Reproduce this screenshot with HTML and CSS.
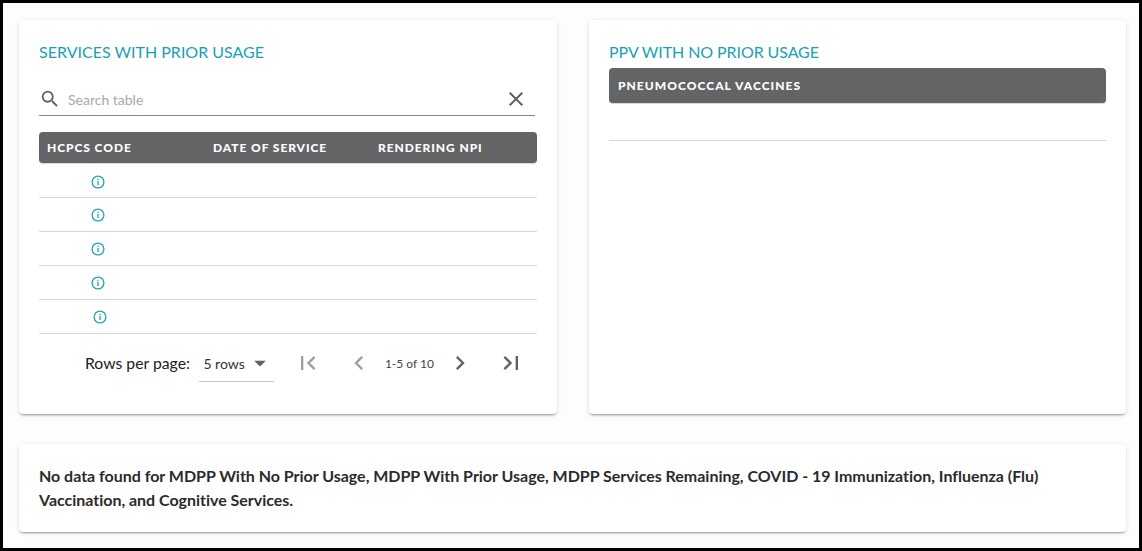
FILE: index.html
```html
<!DOCTYPE html>
<html lang="en">
<head>
<meta charset="utf-8">
<title>Services</title>
<link rel="stylesheet" href="styles.css">
</head>
<body>
<div class="frame">
  <div class="top">
    <section class="card services">
      <h2 class="title">SERVICES WITH PRIOR USAGE</h2>
      <div class="search">
        <svg class="ico-search" width="22" height="22" viewBox="0 0 24 24"><path fill="#616161" d="M15.5 14h-.79l-.28-.27A6.47 6.47 0 0 0 16 9.5 6.5 6.5 0 1 0 9.5 16c1.61 0 3.09-.59 4.23-1.57l.27.28v.79l5 4.99L20.49 19l-4.99-5zm-6 0C7.01 14 5 11.99 5 9.5S7.01 5 9.5 5 14 7.01 14 9.5 11.99 14 9.5 14z"/></svg>
        <span class="placeholder">Search table</span>
        <svg class="ico-clear" width="24" height="24" viewBox="0 0 24 24"><path fill="#616161" d="M19 6.41 17.59 5 12 10.59 6.41 5 5 6.41 10.59 12 5 17.59 6.41 19 12 13.41 17.59 19 19 17.59 13.41 12z"/></svg>
      </div>
      <div class="thead">
        <span class="th th-code">HCPCS CODE</span>
        <span class="th th-date">DATE OF SERVICE</span>
        <span class="th th-npi">RENDERING NPI</span>
      </div>
      <div class="row row-first"><svg class="info" width="14" height="14" viewBox="0 0 14 14"><circle cx="7" cy="7" r="5.9" fill="none" stroke="#1fa3b5" stroke-width="1.3"/><rect x="6.4" y="6" width="1.3" height="4" fill="#1fa3b5"/><rect x="6.4" y="3.8" width="1.3" height="1.3" fill="#1fa3b5"/></svg></div>
      <div class="row"><svg class="info" width="14" height="14" viewBox="0 0 14 14"><circle cx="7" cy="7" r="5.9" fill="none" stroke="#1fa3b5" stroke-width="1.3"/><rect x="6.4" y="6" width="1.3" height="4" fill="#1fa3b5"/><rect x="6.4" y="3.8" width="1.3" height="1.3" fill="#1fa3b5"/></svg></div>
      <div class="row"><svg class="info" width="14" height="14" viewBox="0 0 14 14"><circle cx="7" cy="7" r="5.9" fill="none" stroke="#1fa3b5" stroke-width="1.3"/><rect x="6.4" y="6" width="1.3" height="4" fill="#1fa3b5"/><rect x="6.4" y="3.8" width="1.3" height="1.3" fill="#1fa3b5"/></svg></div>
      <div class="row"><svg class="info" width="14" height="14" viewBox="0 0 14 14"><circle cx="7" cy="7" r="5.9" fill="none" stroke="#1fa3b5" stroke-width="1.3"/><rect x="6.4" y="6" width="1.3" height="4" fill="#1fa3b5"/><rect x="6.4" y="3.8" width="1.3" height="1.3" fill="#1fa3b5"/></svg></div>
      <div class="row row-shift"><svg class="info" width="14" height="14" viewBox="0 0 14 14"><circle cx="7" cy="7" r="5.9" fill="none" stroke="#1fa3b5" stroke-width="1.3"/><rect x="6.4" y="6" width="1.3" height="4" fill="#1fa3b5"/><rect x="6.4" y="3.8" width="1.3" height="1.3" fill="#1fa3b5"/></svg></div>
      <div class="pager">
        <span class="rpp">Rows per page:</span>
        <div class="select"><span>5 rows</span><svg width="28" height="28" viewBox="0 0 24 24"><path fill="#616161" d="M7 10l5 5 5-5z"/></svg></div>
        <svg class="pg pg-first" width="28" height="28" viewBox="0 0 24 24"><path fill="#9e9e9e" d="M18.41 16.59 13.82 12l4.59-4.59L17 6l-6 6 6 6zM6 6h2v12H6z"/></svg>
        <svg class="pg pg-prev" width="28" height="28" viewBox="0 0 24 24"><path fill="#9e9e9e" d="M15.41 7.41 14 6l-6 6 6 6 1.41-1.41L10.83 12z"/></svg>
        <span class="range">1-5 of 10</span>
        <svg class="pg pg-next" width="28" height="28" viewBox="0 0 24 24"><path fill="#616161" d="M10 6 8.59 7.41 13.17 12l-4.58 4.59L10 18l6-6z"/></svg>
        <svg class="pg pg-last" width="28" height="28" viewBox="0 0 24 24"><path fill="#616161" d="M5.59 7.41 10.18 12l-4.59 4.59L7 18l6-6-6-6zM16 6h2v12h-2z"/></svg>
      </div>
    </section>
    <section class="card ppv">
      <h2 class="title ppv-title">PPV WITH NO PRIOR USAGE</h2>
      <div class="ppv-head"><span class="th th-ppv">PNEUMOCOCCAL VACCINES</span></div>
      <div class="ppv-row"></div>
    </section>
  </div>
  <section class="card note">
    <p class="note-text">No data found for MDPP With No Prior Usage, MDPP With Prior Usage, MDPP Services Remaining, COVID - 19 Immunization, Influenza (Flu) Vaccination, and Cognitive Services.</p>
  </section>
</div>
</body>
</html>
```
FILE: styles.css
```css
* { box-sizing: border-box; }
html, body { margin: 0; padding: 0; }
body { font-family: Lato, "Open Sans", sans-serif; color: #212121; }
.frame {
  width: 1142px;
  height: 551px;
  border: 3px solid #000;
  background: #fdfdfd;
  padding: 17px 13px 16px 16px;
  display: flex;
  flex-direction: column;
  gap: 30px;
  overflow: hidden;
}
.top { display: grid; grid-template-columns: 538px 537px; column-gap: 32px; height: 394px; }
.card {
  background: #fff;
  border-radius: 4px;
  box-shadow: 0 2px 2px -1px rgba(0,0,0,.35), 0 1px 5px 0 rgba(0,0,0,.12);
}
.services, .ppv { padding: 0 20px; }
.title {
  margin: 0;
  padding-top: 22px;
  font-size: 16px;
  line-height: 19px;
  font-weight: 400;
  color: #1a9fb3;
}
.search {
  margin-top: 23px;
  width: 496px;
  height: 32px;
  border-bottom: 1px solid #8a8a8a;
  display: flex;
  align-items: center;
  padding-bottom: 1px;
}
.ico-search { flex: none; }
.placeholder { margin-left: 7px; font-size: 14px; color: #a8a8a8; flex: 1; }
.ico-clear { flex: none; margin-right: 7px; }
.thead {
  margin-top: 16px;
  height: 32px;
  background: #636466;
  border-radius: 4px;
  display: flex;
  align-items: center;
  padding-left: 8px;
  border-bottom: 1px solid #d8d8d8;
}
.th {
  font-size: 12px;
  font-weight: 900;
  color: #fff;
  letter-spacing: .92px;
  white-space: nowrap;
}
.th-code { width: 166px; }
.th-date { width: 165px; }
.th-ppv { letter-spacing: 1.03px; }
.row {
  height: 34px;
  border-bottom: 1px solid #d6d6d6;
  display: flex;
  align-items: center;
  padding-left: 52px;
}
.row-first { padding-top: 2px; }
.info { flex: none; }
.row-shift { padding-left: 54px; }
.pager { display: flex; align-items: center; height: 60px; padding: 0 0 2px 46px; }
.rpp { font-size: 15.75px; line-height: 18px; padding-bottom: 1px; color: #212121; }
.select {
  margin-left: 9px;
  width: 75px;
  height: 36px;
  margin-top: 1px;
  padding-left: 4.5px;
  border-bottom: 1px solid #c8c8c8;
  display: flex;
  align-items: center;
  font-size: 14px;
  gap: 1px;
  color: #333;
}
.pg { flex: none; }
.pg-first { margin-left: 20px; }
.pg-prev { margin-left: 23px; }
.range { margin-left: 12px; font-size: 12px; color: #444; width: 49px; white-space: nowrap; }
.pg-next { margin-left: 12px; }
.pg-last { margin-left: 23px; }
.ppv-title { letter-spacing: -.09px; }
.ppv-head {
  margin-top: 7px;
  width: 497px;
  height: 36px;
  background: #636466;
  border-radius: 4px;
  border-bottom: 1px solid #d8d8d8;
  display: flex;
  align-items: center;
  padding-left: 9px;
}
.ppv-row { width: 497px; height: 37px; border-bottom: 1px solid #d6d6d6; }
.note { height: 88px; padding: 20px 20px 0; }
.note-text { margin: 0; font-size: 16px; line-height: 24px; font-weight: 700; color: #2b2b2b; max-width: 1040px; letter-spacing: -.02px; }
```
